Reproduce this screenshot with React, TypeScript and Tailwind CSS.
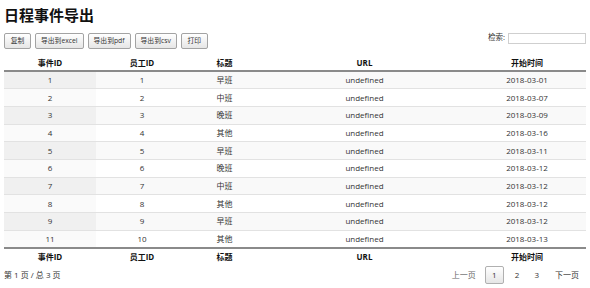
import React from "react";

const rows = [
  ["1", "1", "早班", "undefined", "2018-03-01"],
  ["2", "2", "中班", "undefined", "2018-03-07"],
  ["3", "3", "晚班", "undefined", "2018-03-09"],
  ["4", "4", "其他", "undefined", "2018-03-16"],
  ["5", "5", "早班", "undefined", "2018-03-11"],
  ["6", "6", "晚班", "undefined", "2018-03-12"],
  ["7", "7", "中班", "undefined", "2018-03-12"],
  ["8", "8", "其他", "undefined", "2018-03-12"],
  ["9", "9", "早班", "undefined", "2018-03-12"],
  ["11", "10", "其他", "undefined", "2018-03-13"],
];

const headers = ["事件ID", "员工ID", "标题", "URL", "开始时间"];
const buttons = ["复制", "导出到excel", "导出到pdf", "导出到csv", "打印"];

export default function App() {
  return (
    <div
      className="w-[590px] h-[288px] bg-white px-[4px] text-[#333] overflow-hidden"
      style={{ fontFamily: '"Open Sans", "Noto Sans CJK SC", sans-serif' }}
    >
      <h1
        className="text-[15px] font-bold leading-[20px] pt-[5px] text-[#111]"
        style={{ fontFamily: '"Noto Sans CJK SC", sans-serif' }}
      >
        日程事件导出
      </h1>
      <div className="flex items-center justify-between mt-[8px] h-[16px]">
        <div className="flex gap-[4px]">
          {buttons.map((b) => (
            <button
              key={b}
              className="h-[16px] min-w-[27px] px-[5px] text-[6.8px] leading-none border border-[#a3a3a3] rounded-[2px] text-[#333] bg-gradient-to-b from-white to-[#e6e6e6]"
            >
              {b}
            </button>
          ))}
        </div>
        <div className="flex items-center gap-[3px] pr-[0px] -mt-[6px]">
          <span className="text-[7.5px]">检索:</span>
          <div className="w-[78px] h-[11px] border border-[#cfcfcf] bg-white" />
        </div>
      </div>
      <table className="w-[582px] mt-[5px] border-collapse table-fixed text-[8px]">
        <colgroup>
          <col className="w-[92px]" />
          <col className="w-[92px]" />
          <col className="w-[73px]" />
          <col className="w-[207px]" />
          <col className="w-[118px]" />
        </colgroup>
        <thead>
          <tr className="h-[17px] border-b-2 border-[#8a8a8a]">
            {headers.map((h) => (
              <th key={h} className="font-bold text-[#111] text-center p-0 pt-[1px]">
                {h}
              </th>
            ))}
          </tr>
        </thead>
        <tbody>
          {rows.map((r, i) => {
            const odd = i % 2 === 0;
            return (
              <tr
                key={i}
                className={`h-[17.7px] ${i > 0 ? "border-t border-[#e2e2e2]" : ""} ${
                  odd ? "bg-[#f9f9f9]" : "bg-white"
                }`}
              >
                {r.map((c, j) => (
                  <td
                    key={j}
                    className={`text-center p-0 ${
                      j === 0 ? (odd ? "bg-[#f0f0f0]" : "bg-[#fafafa]") : ""
                    }`}
                  >
                    {c}
                  </td>
                ))}
              </tr>
            );
          })}
        </tbody>
        <tfoot>
          <tr className="h-[18px] border-t-2 border-[#8a8a8a]">
            {headers.map((h) => (
              <th key={h} className="font-bold text-[#111] text-center p-0">
                {h}
              </th>
            ))}
          </tr>
        </tfoot>
      </table>
      <div className="flex items-center justify-between mt-[0px] text-[8px]">
        <span>第 1 页 / 总 3 页</span>
        <div className="flex items-center pr-[7px]">
          <span className="text-[#666] mr-[9px]">上一页</span>
          <span className="w-[19px] h-[18px] flex items-center justify-center border border-[#b0b0b0] rounded-[2px] bg-gradient-to-b from-white to-[#e6e6e6]">
            1
          </span>
          <span className="ml-[11px]">2</span>
          <span className="ml-[15px]">3</span>
          <span className="ml-[16px]">下一页</span>
        </div>
      </div>
    </div>
  );
}
